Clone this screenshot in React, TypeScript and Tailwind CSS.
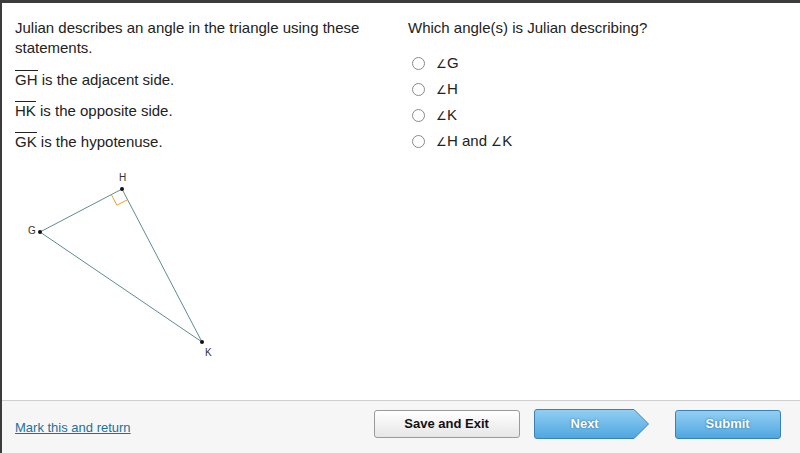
import React from "react";

const options = ["G", "H", "K"];

function Triangle() {
  return (
    <svg width="260" height="200" viewBox="0 0 260 200" className="block">
      <g stroke="#5f8c91" strokeWidth="1" fill="none">
        <line x1="38" y1="71" x2="120" y2="28" />
        <line x1="120" y1="28" x2="200" y2="181" />
        <line x1="38" y1="71" x2="200" y2="181" />
      </g>
      <polyline points="109.4,33.6 114.9,44.2 125.6,38.6" fill="none" stroke="#f0a030" strokeWidth="1" />
      <g fill="#111">
        <circle cx="38" cy="71" r="2" />
        <circle cx="120" cy="28" r="2" />
        <circle cx="200" cy="181" r="2" />
      </g>
      <g fontFamily="'Liberation Sans', Arial, sans-serif" fontSize="10" fill="#333">
        <text x="117" y="20">H</text>
        <text x="26" y="73">G</text>
        <text x="203" y="195">K</text>
      </g>
    </svg>
  );
}

function Over({ children }: { children: React.ReactNode }) {
  return <span className="border-t border-[#222]">{children}</span>;
}

function Ang({ l }: { l: string }) {
  return (
    <>
      <span className="text-[12px]">∠</span>
      {l}
    </>
  );
}

function NextButton() {
  return (
    <div className="relative w-[116px] h-[30px]">
      <svg width="116" height="30" viewBox="0 0 116 30" className="absolute inset-0">
        <defs>
          <linearGradient id="nb" x1="0" y1="0" x2="0" y2="1">
            <stop offset="0" stopColor="#93cff3" />
            <stop offset="1" stopColor="#4ea6e0" />
          </linearGradient>
        </defs>
        <path d="M3 0.5 H100 L114.5 15 L100 29.5 H3 Q0.5 29.5 0.5 27 V3 Q0.5 0.5 3 0.5 Z" fill="url(#nb)" stroke="#3b80b6" strokeWidth="1" />
      </svg>
      <span className="absolute inset-0 pr-[14px] flex items-center justify-center text-white font-bold text-[13px] [text-shadow:0_0_2px_#1d5f8f]">
        Next
      </span>
    </div>
  );
}

export default function App() {
  return (
    <div
      className="w-[800px] h-[453px] bg-white border-t-[3px] border-l-2 border-[#3c3c3c] flex flex-col overflow-hidden text-[#222]"
      style={{ fontFamily: "'Liberation Sans', Arial, sans-serif" }}
    >
      <div className="flex-1 flex">
        <div className="w-[393px] pl-[13px] pt-[15px]">
          <p className="text-[15px] leading-[20px] pr-6">
            Julian describes an angle in the triangle using these statements.
          </p>
          <div className="mt-[12px] flex flex-col gap-[11px] text-[15px] leading-[20px]">
            <p><Over>GH</Over> is the adjacent side.</p>
            <p><Over>HK</Over> is the opposite side.</p>
            <p><Over>GK</Over> is the hypotenuse.</p>
          </div>
          <div className="-ml-[13px] mt-[9px]">
            <Triangle />
          </div>
        </div>
        <div className="flex-1 pl-[13px] pt-[15px]">
          <p className="text-[15px] leading-[20px]">Which angle(s) is Julian describing?</p>
          <div className="mt-[15px] flex flex-col gap-[6px]">
            {options.map((o) => (
              <label key={o} className="flex items-center h-[20px] text-[15px]">
                <span className="ml-[4px] w-[13px] h-[13px] rounded-full border border-[#8a8a8a] bg-white" />
                <span className="ml-[11px]"><Ang l={o} /></span>
              </label>
            ))}
            <label className="flex items-center h-[20px] text-[15px]">
              <span className="ml-[4px] w-[13px] h-[13px] rounded-full border border-[#8a8a8a] bg-white" />
              <span className="ml-[11px]"><Ang l="H" /> and <Ang l="K" /></span>
            </label>
          </div>
        </div>
      </div>
      <div className="h-[53px] shrink-0 border-t border-[#cfcfcf] bg-[#f6f6f6] flex items-center pl-[13px]">
        <a className="text-[13px] text-[#1a729c] underline mt-[2px]">Mark this and return</a>
        <div className="ml-[243px] flex items-center -mt-[6px]">
          <button className="w-[146px] h-[28px] rounded-[3px] border border-[#9a9a9a] bg-gradient-to-b from-white to-[#e6e6e6] text-[13px] font-bold text-[#111]">
            Save and Exit
          </button>
          <div className="ml-[14px]">
            <NextButton />
          </div>
          <button className="ml-[25px] w-[106px] h-[29px] rounded-[3px] border border-[#3b80b6] bg-gradient-to-b from-[#93cff3] to-[#4ea6e0] text-white font-bold text-[13px] [text-shadow:0_0_2px_#1d5f8f]">
            Submit
          </button>
        </div>
      </div>
    </div>
  );
}
